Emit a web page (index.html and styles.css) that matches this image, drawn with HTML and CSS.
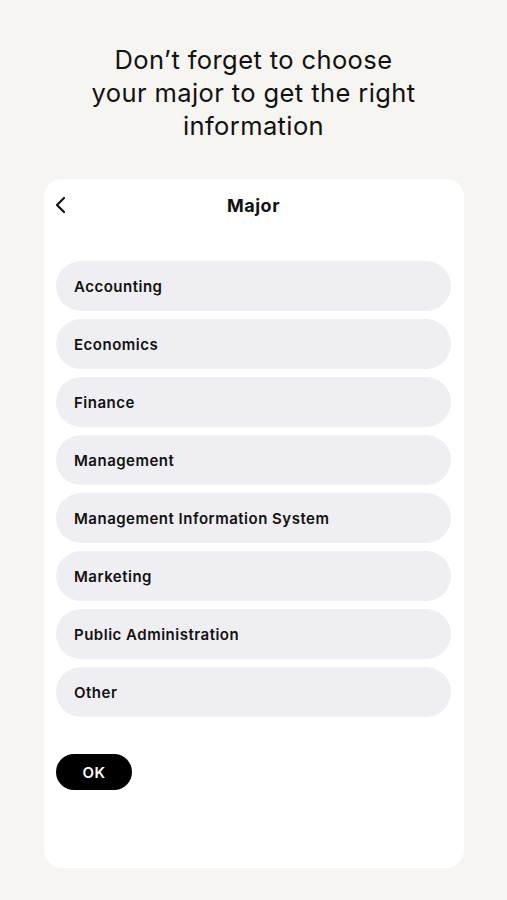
FILE: index.html
```html
<!DOCTYPE html>
<html lang="en">
  <head>
    <meta charset="UTF-8" />
    <meta name="viewport" content="width=device-width, initial-scale=1.0" />
    <title>Choose Major</title>
    <link rel="stylesheet" href="styles.css">
  </head>
  <body>
    <h1 class="intro">Don’t forget to choose<br />your major to get the right<br />information</h1>

    <div class="card">
      <div class="card-header">
        <button class="back" aria-label="Back">
          <svg width="14" height="18" viewBox="0 0 14 18">
            <path d="M10 2 L3 9 L10 16" fill="none" stroke="#111" stroke-width="2.2" stroke-linecap="round" stroke-linejoin="round" />
          </svg>
        </button>
        <h2>Major</h2>
      </div>

      <ul class="majors">
        <li>Accounting</li>
        <li>Economics</li>
        <li>Finance</li>
        <li>Management</li>
        <li>Management Information System</li>
        <li>Marketing</li>
        <li>Public Administration</li>
        <li>Other</li>
      </ul>

      <button class="ok">OK</button>
    </div>
  </body>
</html>
```

FILE: styles.css
```css
body {
  font-family: Inter, "Noto Sans", sans-serif;
  background-color: #f6f5f2;
  margin: 0;
  padding: 43px 0 32px;
  color: #111;
}

.intro {
  margin: 0;
  text-align: center;
  font-size: 25.5px;
  font-weight: 400;
  line-height: 33px;
  letter-spacing: 0.4px;
}

.card {
  margin: 37px 43px 0 44px;
  height: 689px;
  box-sizing: border-box;
  padding: 0 13px 0 12px;
  background-color: #fff;
  border-radius: 18px;
}

.card-header {
  position: relative;
  height: 52px;
  display: flex;
  align-items: center;
  justify-content: center;
}

.card-header h2 {
  margin: 0;
  font-size: 18px;
  font-weight: 700;
  letter-spacing: 0.5px;
}

.back {
  position: absolute;
  left: -2px;
  top: 17px;
  padding: 0;
  border: none;
  background: none;
  display: flex;
}

.majors {
  list-style: none;
  margin: 30px 0 0;
  padding: 0;
  display: flex;
  flex-direction: column;
  gap: 8px;
}

.majors li {
  height: 50px;
  display: flex;
  align-items: center;
  padding-left: 18px;
  background-color: #efeef2;
  border-radius: 25px;
  font-size: 15px;
  font-weight: 600;
  letter-spacing: 0.5px;
}

.ok {
  margin-top: 37px;
  width: 76px;
  height: 36px;
  border: none;
  border-radius: 18px;
  background-color: #000;
  color: #fff;
  font-family: inherit;
  font-size: 15px;
  font-weight: 600;
  letter-spacing: 0.5px;
}
```
